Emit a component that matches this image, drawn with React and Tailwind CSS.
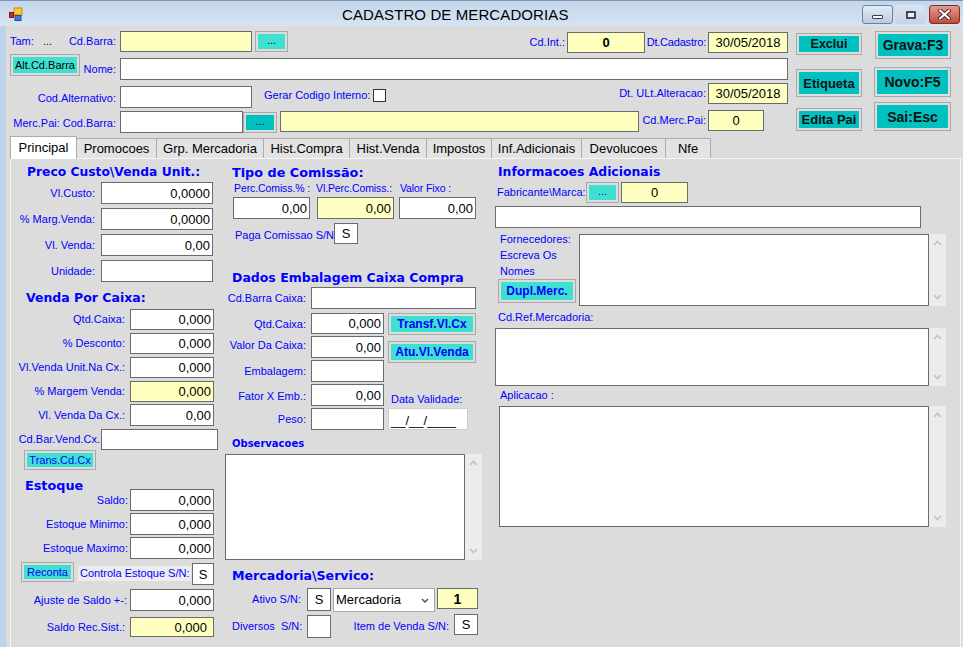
import React from "react";

// Windows Forms style "Cadastro de Mercadorias" window

function Lbl({ className = "", children }) {
  return (
    <div className={"shrink-0 flex items-center text-[11px] text-[#0000ff] whitespace-nowrap " + className}>
      {children}
    </div>
  );
}

function Box({ className = "", children }) {
  return (
    <div
      className={
        "shrink-0 border border-[#6b6b6b] flex items-center text-[13px] text-black leading-none whitespace-nowrap " +
        className
      }
    >
      {children}
    </div>
  );
}

function Btn({ className = "", inner = "", children }) {
  return (
    <div className={"shrink-0 border border-[#a9a9a9] p-[2px] " + className}>
      <div className={"h-full w-full flex items-center justify-center leading-none whitespace-nowrap " + inner}>
        {children}
      </div>
    </div>
  );
}

function Head({ className = "", children }) {
  return (
    <div
      className={
        "font-['DejaVu_Sans',Verdana,sans-serif] font-bold text-[#0000ff] whitespace-nowrap " + className
      }
    >
      {children}
    </div>
  );
}

function VScroll({ className = "" }) {
  return (
    <div className={"w-[17px] shrink-0 bg-[#ececec] flex flex-col items-center justify-between py-[6px] " + className}>
      <svg width="9" height="6" viewBox="0 0 9 6">
        <path d="M1 5 L4.5 1.5 L8 5" stroke="#c2c2c2" strokeWidth="1.6" fill="none" />
      </svg>
      <svg width="9" height="6" viewBox="0 0 9 6">
        <path d="M1 1 L4.5 4.5 L8 1" stroke="#c2c2c2" strokeWidth="1.6" fill="none" />
      </svg>
    </div>
  );
}

const tabs = [
  ["Promocoes", "w-[81px]"],
  ["Grp. Mercadoria", "w-[108px]"],
  ["Hist.Compra", "w-[87px]"],
  ["Hist.Venda", "w-[78px]"],
  ["Impostos", "w-[66px]"],
  ["Inf.Adicionais", "w-[91px]"],
  ["Devolucoes", "w-[85px]"],
  ["Nfe", "w-[46px]"],
];

export default function App() {
  return (
    <div className="w-[963px] h-[647px] overflow-hidden bg-[#bfd4ea] font-['Liberation_Sans',Arial,sans-serif]">
      {/* Title bar */}
      <div className="h-[26px] border-t border-[#7f95ae] bg-gradient-to-b from-[#c3d6eb] to-[#d6e4f2] flex items-center relative">
        <svg className="ml-[9px]" width="14" height="14" viewBox="0 0 14 14">
          <rect x="5" y="1" width="8" height="7" fill="#f7c92b" stroke="#c98a12" strokeWidth="1" />
          <rect x="0.5" y="5.5" width="4" height="5" fill="#d3261e" stroke="#8a1410" strokeWidth="1" />
          <rect x="6" y="8.5" width="6" height="5" fill="#3f78d6" stroke="#244c94" strokeWidth="1" />
        </svg>
        <div className="absolute left-[342px] top-[5px] text-[15px] leading-[17px] text-black tracking-[0.1px]">
          CADASTRO DE MERCADORIAS
        </div>
        <div className="absolute left-[862px] top-[4px] flex">
          <div className="w-[31px] h-[19px] rounded-[3px] border border-[#6f8098] bg-gradient-to-b from-[#e3ecf6] to-[#b9cce2] flex items-end justify-center pb-[4px]">
            <div className="w-[11px] h-[4px] bg-white border border-[#3c3c3c] rounded-[1px]" />
          </div>
          <div className="ml-[2px] w-[31px] h-[19px] rounded-[3px] bg-gradient-to-b from-[#d8e4f1] to-[#c3d5e9] flex items-center justify-center">
            <div className="w-[10px] h-[8px] border-[2px] border-[#4a4a4a] bg-[#e8eef6]" />
          </div>
          <div className="ml-[3px] w-[31px] h-[19px] rounded-[3px] border border-[#7d2f26] bg-gradient-to-b from-[#e29a8d] to-[#c4493a] flex items-center justify-center">
            <svg width="13" height="11" viewBox="0 0 13 11">
              <path d="M2 1.5 L11 9.5 M11 1.5 L2 9.5" stroke="#3a2a2a" strokeWidth="4" strokeLinecap="round" />
              <path d="M2 1.5 L11 9.5 M11 1.5 L2 9.5" stroke="#ffffff" strokeWidth="2.2" strokeLinecap="round" />
            </svg>
          </div>
        </div>
      </div>

      <div className="flex">
        <div className="w-[6px] shrink-0" />
        <div className="flex-1 bg-[#dcdcdc] h-[621px] flex flex-col">
          {/* Header */}
          <div className="h-[111px] flex">
            <div className="w-[784px] flex flex-col pt-[5px]">
              {/* row 1 */}
              <div className="h-[23px] flex items-start">
                <div className="w-[114px] h-[21px] flex items-center text-[11px] text-[#0000ff] shrink-0">
                  <span className="ml-[4px] w-[33px]">Tam:</span>
                  <span className="text-black">...</span>
                  <span className="flex-1 text-right pr-[4px]">Cd.Barra:</span>
                </div>
                <Box className="w-[132px] h-[21px] bg-[#ffffc0]" />
                <Btn className="ml-[3px] w-[33px] h-[21px]" inner="bg-[#40e0d0] text-[11px] text-black pb-[2px]">
                  ...
                </Btn>
                <Lbl className="w-[279px] h-[21px] mt-[1px] justify-end pr-[2px]">Cd.Int.:</Lbl>
                <Box className="w-[78px] h-[21px] mt-[1px] bg-[#ffffc0] justify-center font-bold">0</Box>
                <Lbl className="w-[63px] h-[21px] mt-[1px] justify-end pr-[2px] tracking-[-0.2px]">Dt.Cadastro:</Lbl>
                <Box className="w-[80px] h-[21px] mt-[1px] bg-[#ffffc0] justify-center">30/05/2018</Box>
              </div>
              {/* row 2 */}
              <div className="h-[29px] flex items-start">
                <Btn className="ml-[4px] w-[70px] h-[22px]" inner="bg-[#40e0d0] text-[11px] text-black">
                  Alt.Cd.Barra
                </Btn>
                <Lbl className="w-[40px] h-[22px] mt-[4px] justify-end pr-[4px]">Nome:</Lbl>
                <Box className="w-[668px] h-[22px] mt-[4px] bg-white" />
              </div>
              {/* row 3 */}
              <div className="h-[27px] flex items-start">
                <Lbl className="w-[114px] h-[22px] mt-[3px] pt-[3px] justify-end pr-[4px]">Cod.Alternativo:</Lbl>
                <Box className="w-[132px] h-[22px] mt-[3px] bg-white" />
                <Lbl className="ml-[12px] w-[109px] h-[13px] mt-[6px]">Gerar Codigo Interno:</Lbl>
                <div className="w-[13px] h-[13px] mt-[6px] border border-[#333333] bg-white shrink-0" />
                <Lbl className="w-[322px] h-[21px] justify-end pr-[2px]">Dt. ULt.Alteracao:</Lbl>
                <Box className="w-[80px] h-[21px] bg-[#ffffc0] justify-center">30/05/2018</Box>
              </div>
              {/* row 4 */}
              <div className="h-[24px] flex items-start">
                <Lbl className="w-[114px] h-[22px] mt-[1px] pt-[2px] justify-end pr-[4px]">Merc.Pai: Cod.Barra:</Lbl>
                <Box className="w-[123px] h-[22px] mt-[1px] bg-white" />
                <Btn className="w-[34px] h-[21px] mt-[2px]" inner="bg-[#00c0c0] text-[11px] text-black pb-[2px]">
                  ...
                </Btn>
                <Box className="ml-[3px] w-[359px] h-[21px] mt-[1px] bg-[#ffffc0]" />
                <Lbl className="w-[69px] h-[21px] justify-end pr-[2px]">Cd.Merc.Pai:</Lbl>
                <Box className="w-[56px] h-[21px] bg-[#ffffc0] justify-center">0</Box>
              </div>
            </div>
            {/* button columns */}
            <div className="ml-[6px] w-[66px] flex flex-col">
              <Btn className="mt-[7px] h-[22px]" inner="bg-[#00c0c0] text-[12.5px] font-bold text-[#111]">
                Exclui
              </Btn>
              <Btn className="mt-[14px] h-[28px]" inner="bg-[#00c0c0] text-[13px] font-bold text-[#111]">
                Etiqueta
              </Btn>
              <Btn className="mt-[11px] h-[23px]" inner="bg-[#00c0c0] text-[13px] font-bold text-[#111]">
                Edita Pai
              </Btn>
            </div>
            <div className="ml-[12px] w-[77px] flex flex-col">
              <Btn className="mt-[5px] ml-[1px] h-[28px]" inner="bg-[#00c0c0] text-[14px] font-bold text-[#111]">
                Grava:F3
              </Btn>
              <Btn className="mt-[8px] h-[30px]" inner="bg-[#00c0c0] text-[14px] font-bold text-[#111]">
                Novo:F5
              </Btn>
              <Btn className="mt-[5px] h-[29px]" inner="bg-[#00c0c0] text-[14px] font-bold text-[#111]">
                Sai:Esc
              </Btn>
            </div>
          </div>

          {/* Tabs */}
          <div className="h-[21px] flex items-end pl-[4px] relative z-10">
            <div className="w-[67px] h-[23px] mb-[-1px] bg-white border border-b-0 border-[#acacac] flex items-center justify-center text-[13px] text-black">
              Principal
            </div>
            {tabs.map(([t, w]) => (
              <div
                key={t}
                className={
                  "h-[20px] -ml-[1px] bg-[#e3e3e3] border border-b-0 border-[#acacac] flex items-center justify-center text-[13px] text-black " +
                  w
                }
              >
                {t}
              </div>
            ))}
          </div>

          {/* Tab page */}
          <div className="ml-[4px] w-[951px] flex-1 border-t border-l border-r border-[#f7f7f7] flex">
            {/* Left column */}
            <div className="ml-[2px] w-[209px] flex flex-col shrink-0">
              <Head className="ml-[14px] mt-[6px] h-[14px] leading-[14px] text-[12.3px]">Preco Custo\Venda Unit.:</Head>
              <div className="mt-[3px] flex items-center">
                <Lbl className="w-[88px] justify-end pr-[6px]">Vl.Custo:</Lbl>
                <Box className="w-[112px] h-[22px] bg-white justify-end pr-[2px]">0,0000</Box>
              </div>
              <div className="mt-[4px] flex items-center">
                <Lbl className="w-[88px] justify-end pr-[6px]">% Marg.Venda:</Lbl>
                <Box className="w-[112px] h-[22px] bg-white justify-end pr-[2px]">0,0000</Box>
              </div>
              <div className="mt-[4px] flex items-center">
                <Lbl className="w-[88px] justify-end pr-[6px]">Vl. Venda:</Lbl>
                <Box className="w-[112px] h-[22px] bg-white justify-end pr-[2px]">0,00</Box>
              </div>
              <div className="mt-[4px] flex items-center">
                <Lbl className="w-[88px] justify-end pr-[6px]">Unidade:</Lbl>
                <Box className="w-[112px] h-[22px] bg-white" />
              </div>
              <Head className="ml-[13px] mt-[9px] h-[14px] leading-[14px] text-[12.5px]">Venda Por Caixa:</Head>
              <div className="mt-[4px] flex items-center">
                <Lbl className="w-[117px] justify-end pr-[5px]">Qtd.Caixa:</Lbl>
                <Box className="w-[84px] h-[21px] bg-white justify-end pr-[2px]">0,000</Box>
              </div>
              <div className="mt-[3px] flex items-center">
                <Lbl className="w-[117px] justify-end pr-[5px]">% Desconto:</Lbl>
                <Box className="w-[84px] h-[21px] bg-white justify-end pr-[2px]">0,000</Box>
              </div>
              <div className="mt-[3px] flex items-center">
                <Lbl className="w-[117px] justify-end pr-[5px]">Vl.Venda Unit.Na Cx.:</Lbl>
                <Box className="w-[84px] h-[21px] bg-white justify-end pr-[2px]">0,000</Box>
              </div>
              <div className="mt-[3px] flex items-center">
                <Lbl className="w-[117px] justify-end pr-[5px]">% Margem Venda:</Lbl>
                <Box className="w-[84px] h-[21px] bg-[#ffffc0] justify-end pr-[2px]">0,000</Box>
              </div>
              <div className="mt-[2px] flex items-center">
                <Lbl className="w-[117px] justify-end pr-[5px]">Vl. Venda Da Cx.:</Lbl>
                <Box className="w-[84px] h-[22px] bg-white justify-end pr-[2px]">0,00</Box>
              </div>
              <div className="mt-[3px] flex items-center">
                <Lbl className="w-[88px] justify-end pr-[1px]">Cd.Bar.Vend.Cx.</Lbl>
                <Box className="w-[117px] h-[21px] bg-white" />
              </div>
              <Btn className="ml-[11px] w-[72px] h-[20px]" inner="bg-[#40e0d0] text-[11px] text-[#0000ff]">
                Trans.Cd.Cx
              </Btn>
              <Head className="ml-[12px] mt-[8px] h-[11px] leading-[16px] text-[12.8px]">Estoque</Head>
              <div className="flex items-center">
                <Lbl className="w-[117px] justify-end pr-[2px]">Saldo:</Lbl>
                <Box className="w-[84px] h-[22px] bg-white justify-end pr-[2px]">0,000</Box>
              </div>
              <div className="mt-[2px] flex items-center">
                <Lbl className="w-[117px] justify-end pr-[2px]">Estoque Minimo:</Lbl>
                <Box className="w-[84px] h-[22px] bg-white justify-end pr-[2px]">0,000</Box>
              </div>
              <div className="mt-[2px] flex items-center">
                <Lbl className="w-[117px] justify-end pr-[2px]">Estoque Maximo:</Lbl>
                <Box className="w-[84px] h-[22px] bg-white justify-end pr-[2px]">0,000</Box>
              </div>
              <div className="mt-[3px] flex items-start">
                <Btn className="ml-[8px] w-[53px] h-[20px]" inner="bg-[#40e0d0] text-[11px] text-[#0000ff]">
                  Reconta
                </Btn>
                <Lbl className="ml-[4px] w-[113px] h-[15px] mt-[4px] bg-[#ececec] pl-[2px]">Controla Estoque S/N:</Lbl>
                <Box className="ml-[1px] w-[22px] h-[22px] mt-[1px] bg-white justify-center">S</Box>
              </div>
              <div className="mt-[4px] flex items-center">
                <Lbl className="w-[117px] justify-end pr-[3px]">Ajuste de Saldo +-:</Lbl>
                <Box className="w-[84px] h-[22px] bg-white justify-end pr-[2px]">0,000</Box>
              </div>
              <div className="mt-[6px] flex items-center">
                <Lbl className="w-[117px] justify-end pr-[5px]">Saldo Rec.Sist.:</Lbl>
                <Box className="w-[84px] h-[20px] bg-[#ffffc0] justify-end pr-[6px] text-[#0000ff]">0,000</Box>
              </div>
            </div>

            {/* Middle column */}
            <div className="ml-[3px] w-[257px] flex flex-col shrink-0">
              <Head className="ml-[7px] mt-[7px] h-[14px] leading-[14px] text-[12.8px]">Tipo de Comissão:</Head>
              <div className="mt-[2px] h-[12px] flex text-[10.5px] leading-[12px] text-[#0000ff] whitespace-nowrap tracking-[-0.1px]">
                <span className="ml-[9px] w-[82px]">Perc.Comiss.% :</span>
                <span className="w-[84px]">Vl.Perc.Comiss.:</span>
                <span>Valor Fixo :</span>
              </div>
              <div className="mt-[3px] flex">
                <Box className="ml-[8px] w-[77px] h-[22px] bg-white justify-end pr-[2px]">0,00</Box>
                <Box className="ml-[7px] w-[77px] h-[22px] bg-[#ffffc0] justify-end pr-[2px]">0,00</Box>
                <Box className="ml-[5px] w-[77px] h-[22px] bg-white justify-end pr-[2px]">0,00</Box>
              </div>
              <div className="mt-[4px] flex items-center">
                <Lbl className="ml-[10px] w-[99px] pt-[3px]">Paga Comissao S/N:</Lbl>
                <Box className="w-[24px] h-[21px] bg-white justify-center">S</Box>
              </div>
              <Head className="ml-[7px] mt-[27px] h-[14px] leading-[14px] text-[12.5px]">Dados Embalagem Caixa Compra</Head>
              <div className="mt-[2px] flex items-center">
                <Lbl className="w-[86px] justify-end pr-[5px]">Cd.Barra Caixa:</Lbl>
                <Box className="w-[165px] h-[22px] bg-white" />
              </div>
              <div className="mt-[4px] flex">
                <div className="w-[158px] flex flex-col">
                  <div className="flex items-center">
                    <Lbl className="w-[86px] justify-end pr-[5px] pt-[2px]">Qtd.Caixa:</Lbl>
                    <Box className="w-[73px] h-[21px] bg-white justify-end pr-[2px]">0,000</Box>
                  </div>
                  <div className="mt-[2px] flex items-center">
                    <Lbl className="w-[86px] justify-end pr-[5px] pb-[3px]">Valor Da Caixa:</Lbl>
                    <Box className="w-[73px] h-[22px] bg-white justify-end pr-[2px]">0,00</Box>
                  </div>
                  <div className="mt-[2px] flex items-center">
                    <Lbl className="w-[86px] justify-end pr-[5px]">Embalagem:</Lbl>
                    <Box className="w-[73px] h-[22px] bg-white" />
                  </div>
                  <div className="mt-[2px] flex items-center">
                    <Lbl className="w-[86px] justify-end pr-[5px] pt-[3px]">Fator X Emb.:</Lbl>
                    <Box className="w-[73px] h-[22px] bg-white justify-end pr-[2px]">0,00</Box>
                  </div>
                  <div className="mt-[2px] flex items-center">
                    <Lbl className="w-[86px] justify-end pr-[5px]">Peso:</Lbl>
                    <Box className="w-[73px] h-[22px] bg-white" />
                  </div>
                </div>
                <div className="ml-[5px] w-[88px] flex flex-col">
                  <Btn className="h-[22px]" inner="bg-[#40e0d0] text-[12px] font-bold text-[#0000ff]">
                    Transf.Vl.Cx
                  </Btn>
                  <Btn className="mt-[6px] h-[22px]" inner="bg-[#40e0d0] text-[12px] font-bold text-[#0000ff]">
                    Atu.Vl.Venda
                  </Btn>
                  <Lbl className="mt-[30px] ml-[3px] h-[12px]">Data Validade:</Lbl>
                  <Box className="mt-[3px] w-[80px] h-[22px] bg-white border-[#cfcfcf] pl-[2px] pt-[3px] text-[12px]">
                    __/__/____
                  </Box>
                </div>
              </div>
              <Head className="ml-[7px] mt-[8px] h-[12px] leading-[12px] text-[10px]">Observacoes</Head>
              <div className="mt-[4px] flex">
                <Box className="w-[240px] h-[106px] bg-white" />
                <VScroll className="h-[106px]" />
              </div>
              <Head className="ml-[7px] mt-[9px] h-[14px] leading-[14px] text-[12.6px]">Mercadoria\Servico:</Head>
              <div className="mt-[5px] flex items-start">
                <Lbl className="w-[82px] h-[23px] justify-end pr-[6px]">Ativo S/N:</Lbl>
                <Box className="w-[24px] h-[23px] bg-white justify-center">S</Box>
                <div className="ml-[2px] w-[102px] h-[24px] border border-[#a8a8a8] bg-white flex items-center justify-between pl-[2px] pr-[5px] text-[13px] text-black shrink-0">
                  <span>Mercadoria</span>
                  <svg width="8" height="5" viewBox="0 0 8 5">
                    <path d="M1 1 L4 4 L7 1" stroke="#555" strokeWidth="1.5" fill="none" />
                  </svg>
                </div>
                <Box className="ml-[2px] w-[41px] h-[21px] bg-[#ffffc0] justify-center font-bold text-[14px] text-[#0000ff]">
                  1
                </Box>
              </div>
              <div className="mt-[3px] flex items-start">
                <Lbl className="ml-[7px] w-[75px] h-[23px]">Diversos&nbsp; S/N:</Lbl>
                <Box className="w-[24px] h-[23px] bg-white" />
                <Lbl className="w-[123px] h-[23px] justify-end pr-[5px]">Item de Venda S/N:</Lbl>
                <Box className="-mt-[1px] w-[24px] h-[21px] bg-white justify-center">S</Box>
              </div>
            </div>

            {/* Right column */}
            <div className="ml-[13px] w-[451px] flex flex-col shrink-0">
              <Head className="ml-[3px] mt-[6px] h-[14px] leading-[14px] text-[12.4px]">Informacoes Adicionais</Head>
              <div className="mt-[3px] flex items-center">
                <Lbl className="ml-[2px] w-[89px] h-[21px]">Fabricante\Marca:</Lbl>
                <Btn className="w-[33px] h-[21px]" inner="bg-[#40e0d0] text-[11px] text-[#0000ff] pb-[2px]">
                  ...
                </Btn>
                <Box className="ml-[2px] w-[67px] h-[21px] bg-[#ffffc0] justify-center text-[#0000ff]">0</Box>
              </div>
              <Box className="mt-[3px] w-[426px] h-[22px] bg-white" />
              <div className="mt-[6px] flex">
                <div className="w-[84px] flex flex-col -mt-[3px]">
                  <div className="ml-[5px] text-[11px] leading-[16px] text-[#0000ff]">
                    <div>Fornecedores:</div>
                    <div>Escreva Os</div>
                    <div>Nomes</div>
                  </div>
                  <Btn className="ml-[3px] w-[78px] h-[24px]" inner="bg-[#40e0d0] text-[12px] font-bold text-[#0000ff]">
                    Dupl.Merc.
                  </Btn>
                </div>
                <Box className="w-[350px] h-[72px] bg-white" />
                <VScroll className="h-[72px]" />
              </div>
              <Lbl className="ml-[3px] mt-[5px] h-[12px]">Cd.Ref.Mercadoria:</Lbl>
              <div className="mt-[5px] flex">
                <Box className="w-[434px] h-[58px] bg-white" />
                <VScroll className="h-[58px]" />
              </div>
              <Lbl className="ml-[5px] mt-[3px] h-[12px]">Aplicacao :</Lbl>
              <div className="mt-[5px] ml-[4px] flex">
                <Box className="w-[430px] h-[121px] bg-white" />
                <VScroll className="h-[121px]" />
              </div>
            </div>
          </div>
        </div>
      </div>
    </div>
  );
}
